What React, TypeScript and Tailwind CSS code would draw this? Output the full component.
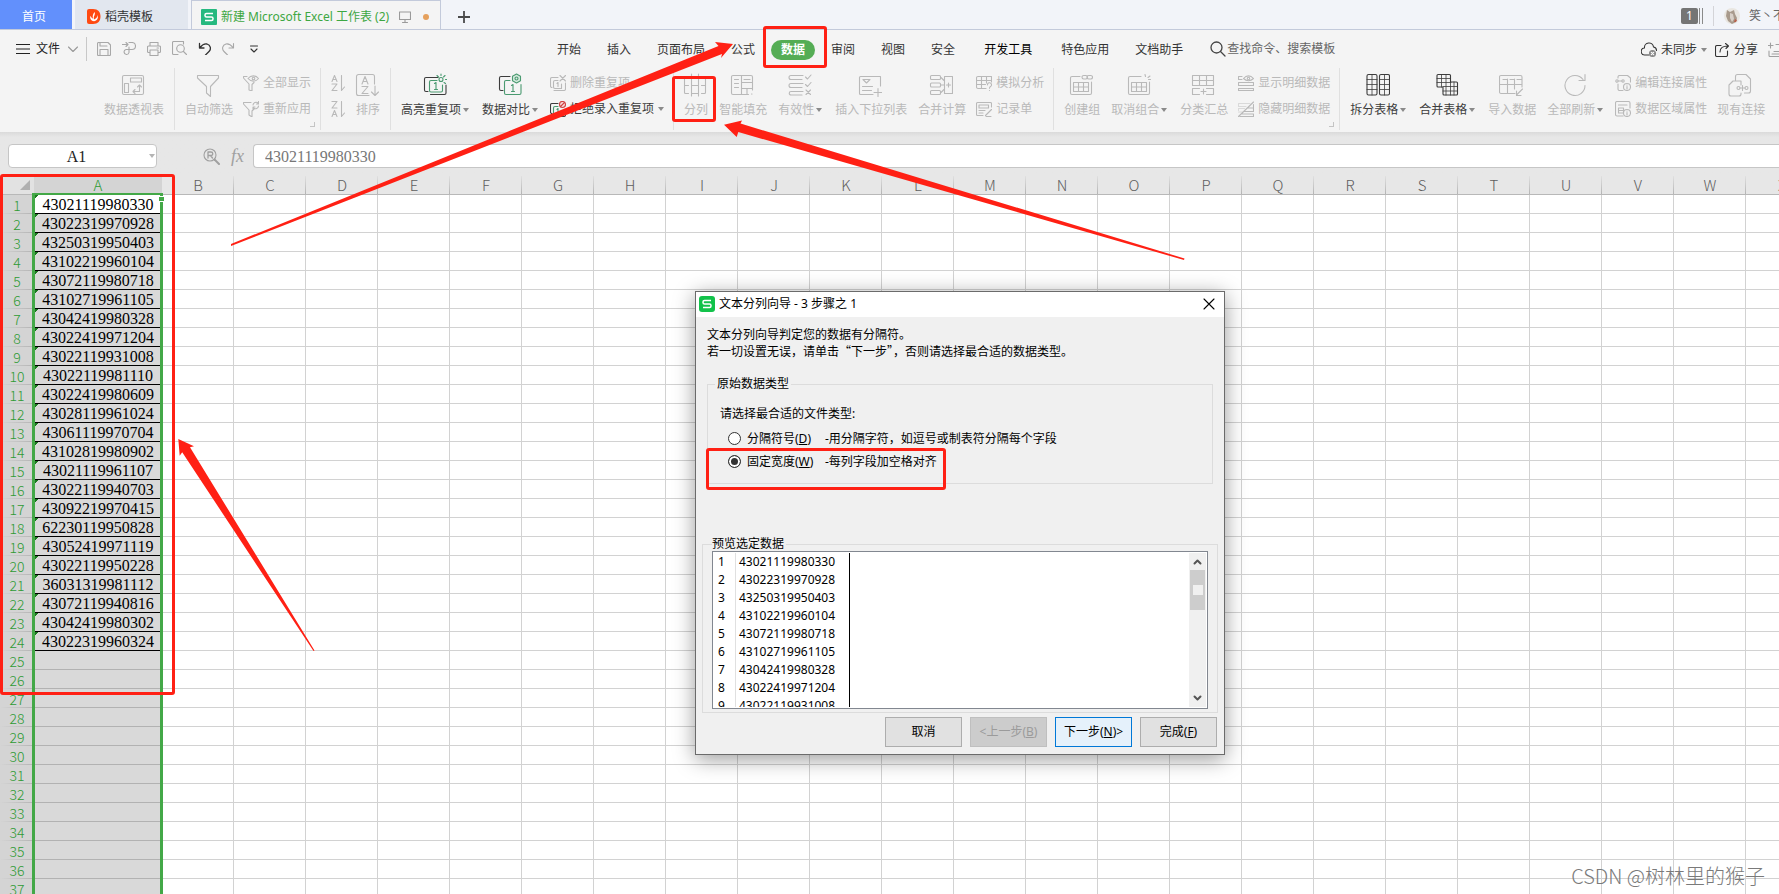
import React from "react";
import clsx from "clsx";

const ids = [
  "43021119980330", "43022319970928", "43250319950403", "43102219960104",
  "43072119980718", "43102719961105", "43042419980328", "43022419971204",
  "43022119931008", "43022119981110", "43022419980609", "43028119961024",
  "43061119970704", "43102819980902", "43021119961107", "43022119940703",
  "43092219970415", "62230119950828", "43052419971119", "43022119950228",
  "36031319981112", "43072119940816", "43042419980302", "43022319960324",
];

const columns = "BCDEFGHIJKLMNOPQRSTUVWX".split("");
const rows = Array.from({ length: 37 }, (_, i) => i + 1);

type IconProps = { size?: number; children: React.ReactNode; className?: string };

const Icon = ({ size = 24, children, className }: IconProps) => (
  <svg
    width={size}
    height={size}
    viewBox={`0 0 ${size} ${size}`}
    fill="none"
    stroke="currentColor"
    strokeWidth="1.1"
    strokeLinecap="round"
    strokeLinejoin="round"
    className={clsx("shrink-0", className)}
    aria-hidden="true"
  >
    {children}
  </svg>
);

const Caret = ({ className = "text-[#8a8a8a]" }: { className?: string }) => (
  <svg width="6" height="4" viewBox="0 0 6 4" className={clsx("shrink-0", className)} aria-hidden="true">
    <path d="M0 0h6L3 4z" fill="currentColor" />
  </svg>
);

const SheetLogo = ({ flat = false }: { flat?: boolean }) => (
  <svg width="16" height="16" viewBox="0 0 16 16" className="shrink-0" aria-hidden="true">
    <rect width="16" height="16" rx={flat ? 1 : 3} fill={flat ? "#26b97f" : "#12c24a"} />
    <path
      d="M12 4.500H5.500a1.500 1.500 0 0 0-1.500 1.500v.5A1.500 1.500 0 0 0 5.500 8h5A1.500 1.500 0 0 1 12 9.500v.5a1.500 1.500 0 0 1-1.500 1.500H4"
      fill="none"
      stroke="#fff"
      strokeWidth="1.500"
    />
  </svg>
);

/* ---- ribbon icons ---- */

const big = {
  pivot: (
    <>
      <rect x="1.500" y="2.500" width="21" height="19" rx="1.500" />
      <rect x="9.500" y="5" width="11" height="4" />
      <rect x="3.500" y="10.500" width="4" height="9" />
      <path d="M12 18.500h6.500V12M14 16.500l-2 2 2 2M16.500 14l2-2 2 2" />
    </>
  ),
  funnel: <path d="M1.500 2.500h21V5L14.500 13.500v10l-4-3.500v-6.500L1.500 5z" />,
  sort: (
    <>
      <path d="M19.500 11V3.500a2 2 0 0 0-2-2h-14a2 2 0 0 0-2 2v17a2 2 0 0 0 2 2H14M20 13v9M16.500 19l3.500 3.500 3.500-3.500" />
      <path d="M7 11l3-7.500 3 7.500M8 8.500h4M7 13.500h6l-6 7h6" />
    </>
  ),
  highlight: (
    <>
      <path d="M15 4.500H3a1.500 1.500 0 0 0-1.500 1.500v11A1.500 1.500 0 0 0 3 18.500h2" />
      <path d="M7.500 21.500h14a1.500 1.500 0 0 0 1.500-1.500V12" />
      <g stroke="#4a9a70">
        <path d="M14 7.500H8A1.500 1.500 0 0 0 6.500 9v8.500A1.500 1.500 0 0 0 8 19h10a1.500 1.500 0 0 0 1.500-1.500V12M11.500 10.500l1.500-1v7M11.500 16.500h3" />
        <circle cx="18" cy="6.500" r="2" />
        <path d="M18 1v1.500M22 2.500l-1.500 1.500M14 2.500l1.500 1.500M22.500 6.500H24M21 9.500l1.500 1" />
      </g>
    </>
  ),
  compare: (
    <>
      <path d="M12 3.500H3A1.500 1.500 0 0 0 1.500 5v11A1.500 1.500 0 0 0 3 17.500h2" />
      <g stroke="#4a9a70">
        <path d="M12 7.500H8A1.500 1.500 0 0 0 6.500 9v11A1.500 1.500 0 0 0 8 21.500h13.500a1.500 1.500 0 0 0 1.500-1.500v-8.500" />
        <path d="M13.500 12.500l1.500-1v7M13.500 18.500h3" />
        <path d="M18.500 1l4 2.300v4.500l-4 2.200-4-2.200V3.300z" fill="#d8ebe0" />
        <circle cx="18.500" cy="5.500" r="1.500" />
      </g>
    </>
  ),
  split: (
    <path d="M8.500 1v22M15.500 1v22M5.500 3.500H2.500A1 1 0 0 0 1.500 4.500v15a1 1 0 0 0 1 1h3M1.500 12.500h4M18.500 3.500h3a1 1 0 0 1 1 1v15a1 1 0 0 1-1 1h-3M18.500 12.500h4M8.500 3.500h7M8.500 12.500h7M8.500 20.500h7" />
  ),
  fill: (
    <>
      <path d="M11.500 21.500H3A1.500 1.500 0 0 1 1.500 20V4A1.500 1.500 0 0 1 3 2.500h18A1.500 1.500 0 0 1 22.500 4v13M11.500 2.500v19h7M11.500 9.500h11M11.500 15.500h11M4.500 6.500h4M4.500 10.500h4M4.500 14.500h4M14 6.500h6M21.500 21h.5" />
      <path d="M17 15.500v6" />
    </>
  ),
  valid: (
    <>
      <path d="M15 2.500H3a1.500 1.500 0 0 0 0 4h11M15 10.500H3a1.500 1.500 0 0 0 0 4h11M15 18.500H3a1.500 1.500 0 0 0 0 3.500h11" />
      <path d="M17.500 4l2 2 3.500-4M17.500 11.500l2 2 3.500-4M18 17l4.500 4.500M22.500 17L18 21.500" />
    </>
  ),
  dropdown: (
    <>
      <path d="M22.500 13V3.500h-20A1 1 0 0 0 1.500 4.500v16a1 1 0 0 0 1 1H15" />
      <path d="M5 6.500h7l-3.500 3.500zM4.500 13.500h10M4.500 17.500h9M20 15.500v8M16 19.500h8" />
    </>
  ),
  merge: (
    <>
      <rect x="1.500" y="2.500" width="10" height="4" rx="1" />
      <rect x="1.500" y="10" width="10" height="4" rx="1" />
      <rect x="1.500" y="17.500" width="10" height="4" rx="1" />
      <path d="M12 4.500l3 3M12 12h3M12 19.500l3-3M15.500 3.500h8v17h-8zM17.500 12h4M19.500 10v4" />
    </>
  ),
  group: (
    <>
      <path d="M11 3.500H3A1.500 1.500 0 0 0 1.500 5v15A1.500 1.500 0 0 0 3 21.500h18a1.500 1.500 0 0 0 1.500-1.500V9M4.500 9.500h15v9h-15zM4.500 14h15M9.500 9.500v9M14.500 9.500v9" />
      <rect x="13" y="2.500" width="5.500" height="3.500" rx="1.700" />
      <rect x="18" y="2.500" width="5.500" height="3.500" rx="1.700" />
    </>
  ),
  ungroup: (
    <>
      <path d="M14 3.500H3A1.500 1.500 0 0 0 1.500 5v15A1.500 1.500 0 0 0 3 21.500h18a1.500 1.500 0 0 0 1.500-1.500V9M4.500 9.500h15v9h-15zM4.500 14h15M9.500 9.500v9M14.500 9.500v9" />
      <path d="M18 1.500l.5 2M23 3l-2 1.500M21.500 6.500h2" />
    </>
  ),
  subtotal: (
    <path d="M1.500 2.500h21v10h-21zM1.500 7.500h21M8.500 2.500v10M15.500 2.500v10M8.500 15.500h-7v6h7M15.500 15.500h7v6h-7M10 18.500h5M12.500 16v5" />
  ),
  splitTable: (
    <>
      <rect x="1" y="1.500" width="10" height="20.500" rx="1.500" />
      <rect x="13.500" y="1.500" width="10" height="20.500" rx="1.500" />
      <path strokeWidth=".8" d="M6 2v20M1 6.500h10M1 11.500h10M1 16.500h10M18.500 2v20M13.500 6.500h10M13.500 11.500h10M13.500 16.500h10" />
    </>
  ),
  mergeTable: (
    <>
      <path d="M3 1.500h11.500a1 1 0 0 1 1 1V9h6a1 1 0 0 1 1 1v11a1 1 0 0 1-1 1H9a1 1 0 0 1-1-1v-7H3a1 1 0 0 1-1-1V2.500a1 1 0 0 1 1-1z" />
      <path strokeWidth=".8" d="M6.500 2v12M11 2v20M15.500 9v13M2 5.500h13M2 9.500h14M8 13.500h14M8 18h14M19 9v13" />
    </>
  ),
  importData: (
    <path d="M16 20.500H2A1.500 1.500 0 0 1 .5 19V4A1.500 1.500 0 0 1 2 2.500h19.500A1.500 1.500 0 0 1 23 4v10M1 11.500h22M8.500 6v14M15.500 6v10M4 6.500h4.500M11 6.500h4.500M18 6.500h5M23.500 16l-6 6M17.500 18v4.500H22" />
  ),
  refresh: <path d="M22 12.500A10 10 0 1 1 20 6.500M22 1.500v6h-6" />,
  links: (
    <>
      <path d="M7.500 7V3.500a2 2 0 0 1 2-2H18l4.500 4.500v12a2 2 0 0 1-2 2h-4M13 20v1a2 2 0 0 1-2 2H3a2 2 0 0 1-2-2V12l4-4h8v4" />
      <circle cx="10.500" cy="15" r="1.500" />
      <circle cx="18.500" cy="15" r="1.500" />
      <path d="M12 15h5M14.500 12.500v5" />
    </>
  ),
};

const small = {
  showAll: (
    <>
      <path d="M4 1.500H.5V3L6 9v6l3 1V9.500l2-2" />
      <path d="M5 3.500C8 0 12.500 0 15.500 3.500 12.500 7 8 7 5 3.500z" />
      <circle cx="10.500" cy="3.500" r="1.300" />
    </>
  ),
  reapply: (
    <>
      <path d="M8 1.500H.5V3L6 9v5l3 2v-6l2-2" />
      <path d="M10 4a3 3 0 0 1 5-2M15.500.5V3h-2M15.500 5a3 3 0 0 1-5 2M10 8V6h2" />
    </>
  ),
  az: <path d="M2 6.500l2.500-6 2.500 6M3 4.500h3M2 9h5l-5 6.500h5M11.500.5v15M14.500 12l-3 3.500" />,
  za: <path d="M2 .5h5L2 7h5M2 15.500l2.500-6 2.500 6M3 13.500h3M11.500.5v15M14.500 12l-3 3.500" />,
  dedupe: (
    <>
      <path d="M8 2.500H2A1.500 1.500 0 0 0 .5 4v7A1.500 1.500 0 0 0 2 12.500M4 15.500h10a1.500 1.500 0 0 0 1.500-1.500V8" />
      <path d="M8 5.500H5A1.500 1.500 0 0 0 3.500 7v5A1.500 1.500 0 0 0 5 13.500h6.500V9M7 8.500l1-1v4M10 .5L15.500 6M15.500.5L10 6" />
    </>
  ),
  reject: (
    <>
      <path d="M8 2.500H2A1.500 1.500 0 0 0 .5 4v7A1.500 1.500 0 0 0 2 12.500M4 15.500h10a1.500 1.500 0 0 0 1.500-1.500V9" />
      <path stroke="#4a9a70" d="M8 5.500H5A1.500 1.500 0 0 0 3.500 7v5A1.500 1.500 0 0 0 5 13.500h6.500V10M7 8.500l1-1v4" />
      <circle cx="12.500" cy="3.500" r="3" stroke="#cf4141" fill="#f8dede" />
      <path d="M10.500 5.500l4-4" stroke="#cf4141" />
    </>
  ),
  whatIf: (
    <>
      <path d="M10 13.500H2A1.500 1.500 0 0 1 .5 12V3A1.500 1.500 0 0 1 2 1.500h13.500V7M.5 5.500h15M.5 9.500h9M5.500 1.500v12M10.500 1.500V8" />
      <path d="M11.500 10a2 2 0 1 1 3 1.500c-.8.5-1 1-1 1.800M13.500 15.500v.2" />
    </>
  ),
  form: (
    <path d="M15.500 6V2.500a1 1 0 0 0-1-1h-13a1 1 0 0 0-1 1v11a1 1 0 0 0 1 1H7M3 4h9.500v3H3zM3 9.500h6M3 12h4M15.500 8.500l-6 6M10 15.500h5" />
  ),
  showDetail: (
    <>
      <path d="M4 1.500H.5v3H4M.5 7.500h15v3H.5zM.5 13.500h15v2H.5z" />
      <path d="M5.500 3.500c3-3.500 7-3.500 10 0-3 3-7 3-10 0z" />
      <circle cx="10.500" cy="3.500" r="1.200" />
    </>
  ),
  hideDetail: (
    <>
      <path d="M.5 15.500l15-14.500M15.500 3.500V7h-6M15.500 7v3.500H6M2 15.500h13.500v-2.500H4" />
      <path strokeOpacity=".45" d="M12 2.500H.5v3H8M.5 9.500v-2h6M.5 11h4" />
    </>
  ),
  editLink: (
    <>
      <path d="M3 3V2A1.500 1.500 0 0 1 4.500.5h8L15.500 3v4M3 9v5A1.500 1.500 0 0 0 4.500 15.500H8" />
      <circle cx="2" cy="6" r="1.200" />
      <circle cx="8" cy="6" r="1.200" />
      <path d="M3 6h4" />
      <circle cx="12" cy="12" r="3.500" />
      <path d="M12 11.500v2.500M12 10v.1" />
    </>
  ),
  rangeProps: (
    <>
      <path d="M15 7V2a1.500 1.500 0 0 0-1.500-1.500H2A1.500 1.500 0 0 0 .5 2v11.500A1.500 1.500 0 0 0 2 15h6M3.500 4h8.500M3.500 7h5v5h-5zM3.500 9.500H8" />
      <circle cx="12" cy="12" r="3.500" />
      <path d="M12 11.500v2.500M12 10v.1" />
    </>
  ),
};

type BigButtonProps = { icon: keyof typeof big; label: string; caret?: boolean; enabled?: boolean };

const BigButton = ({ icon, label, caret, enabled }: BigButtonProps) => (
  <button
    type="button"
    disabled={!enabled}
    className={clsx(
      "flex shrink-0 flex-col items-center gap-[5px] pt-[6px] pr-[5px] pl-[6px] leading-4",
      enabled ? "text-[#3c3c3c]" : "text-[#b9b9b9]"
    )}
  >
    <Icon className="mr-px -ml-px">{big[icon]}</Icon>
    <span className="flex items-center gap-[2px]">
      {label}
      {caret && (
        <span className="w-2">
          <Caret />
        </span>
      )}
    </span>
  </button>
);

type SmallItem = { icon: keyof typeof small; label?: string; caret?: boolean; enabled?: boolean };

const SmallStack = ({ items, corner }: { items: SmallItem[]; corner?: boolean }) => (
  <div className="relative flex shrink-0 flex-col pt-[3px] pr-[4px] pl-[5px]">
    {items.map((item) => (
      <button
        key={item.icon}
        type="button"
        disabled={!item.enabled}
        aria-label={item.label ?? item.icon}
        className={clsx(
          "flex h-[26px] items-center gap-1 leading-4",
          item.enabled ? "text-[#3c3c3c]" : "text-[#b9b9b9]"
        )}
      >
        <Icon size={16}>{small[item.icon]}</Icon>
        {item.label}
        {item.caret && (
          <span className="w-[6px]">
            <Caret />
          </span>
        )}
      </button>
    ))}
    {corner && <span className="absolute right-0 -bottom-[5px] size-[5px] border-r border-b border-[#c4c4c4]" />}
  </div>
);

const Divider = () => <span className="mt-px mr-[4px] ml-[5px] h-[62px] w-px shrink-0 bg-[#e0e0e0]" />;

const TitleTabs = () => (
  <div className="flex h-[30px] shrink-0 overflow-hidden border-b border-[#c3cadb] bg-[#f2f4f9]">
    <a href="#home" className="flex w-[72px] shrink-0 items-center justify-center bg-[#6290fc] pt-1 pr-1 text-white">
      首页
    </a>
    <a
      href="#template"
      className="ml-[3px] flex w-[116px] shrink-0 items-center gap-1 border-r-[3px] border-[#f2f4f9] bg-[#e2e7ef] pt-1 pl-3 text-[#333]"
    >
      <svg width="14" height="15" viewBox="0 0 14 15" aria-hidden="true">
        <path d="M0 2Q0 0 2 0h4c5 0 7.500 3 7.500 7.500S11 15 6 15H2q-2 0-2-2z" fill="#ff4a12" />
        <path
          d="M7.500 3C9 5.500 6 7 7 10.500 9 9.500 10.500 8 10.800 6 11.500 9 10 12 7 12.300 4 12 2.800 10 3.200 6.800 4 8 4.800 9 6 9.800 5.300 7 6 5 7.500 3z"
          fill="#fff"
        />
      </svg>
      稻壳模板
    </a>
    <div className="flex w-[250px] shrink-0 items-center gap-1 border-x border-t border-[#c3cadb] bg-[#f4f4f4] pt-1 pl-[9px] text-[#3da742]">
      <SheetLogo flat />
      <span className="w-[174px] shrink-0 whitespace-nowrap">新建 Microsoft Excel 工作表 (2)</span>
      <Icon size={12} className="text-[#9a9a9a]">
        <path d="M.5 1h11v7.500H.5zM6 8.500v3M3.500 11.500h5" />
      </Icon>
      <span className="ml-[8px] size-[6px] rounded-full bg-[#e5a05c]" />
    </div>
    <button type="button" aria-label="新建标签" className="w-[46px] shrink-0 pt-1 pl-[17px] text-[#4a4a4a]">
      <svg width="12" height="12" viewBox="0 0 12 12" aria-hidden="true">
        <path d="M6 0v12M0 6h12" stroke="currentColor" strokeWidth="1.800" />
      </svg>
    </button>
    <div className="ml-auto flex w-[98px] shrink-0 items-center overflow-hidden pt-[2px] whitespace-nowrap text-[#666]">
      <span className="flex h-4 w-[17px] shrink-0 items-center justify-center rounded-[2px] bg-[#757575] text-white">
        1
      </span>
      <span className="ml-px h-4 w-[4px] shrink-0 border-x border-[#8a8a8a]" />
      <span className="mr-[10px] ml-[10px] h-5 w-px shrink-0 bg-[#d4d4d8]" />
      <svg width="16" height="16" viewBox="0 0 16 16" className="mr-[9px] shrink-0" aria-hidden="true">
        <circle cx="8" cy="8" r="8" fill="#e9e6e1" />
        <path d="M3 2l3 2 4-2 1 4 2 4-1 4-4 2-4-3-2-5z" fill="#a89a8c" />
        <path d="M6 5l3 1 1 5-2 3-2-4z" fill="#d8d0c8" />
        <path d="M11 11l2 1-1 2-2 0z" fill="#b8604c" />
      </svg>
      笑丶不
    </div>
  </div>
);

const menuTabs = [
  "开始", "插入", "页面布局", "公式", "数据", "审阅", "视图", "安全", "开发工具", "特色应用", "文档助手",
];

const MenuRow = () => (
  <div className="flex h-[37px] shrink-0 items-center overflow-hidden whitespace-nowrap text-[#333]">
    <div className="flex w-[544px] shrink-0 items-center pl-4">
      <button type="button" className="flex items-center gap-[6px] text-[#222]">
        <Icon size={14}>
          <path d="M0 2.500h14M0 7h14M0 11.500h14" />
        </Icon>
        文件
        <Icon size={10} className="ml-[2px] text-[#999]">
          <path d="M.5 3L5 7.500 9.500 3" />
        </Icon>
      </button>
      <span className="mr-[10px] ml-[8px] h-6 w-px bg-[#c8c8c8]" />
      <div className="flex items-center gap-[11px] text-[#a8a8a8]">
        <button type="button" aria-label="保存">
          <Icon size={14}>
            <path d="M.5 1.500a1 1 0 0 1 1-1H11L13.500 3v9.500a1 1 0 0 1-1 1h-11a1 1 0 0 1-1-1zM3 .5V4h7M3 13.500v-6h8v6" />
          </Icon>
        </button>
        <button type="button" aria-label="输出为PDF">
          <Icon size={14}>
            <path d="M0 2.500h6M4 .5l2 2-2 2M7 .5h3a3.500 3.500 0 0 1 0 7H4a2.500 2.500 0 1 0 3 3V5" />
          </Icon>
        </button>
        <button type="button" aria-label="打印">
          <Icon size={14}>
            <path d="M3 4V.5h8V4M3 10.500H1.500a1 1 0 0 1-1-1V5a1 1 0 0 1 1-1h11a1 1 0 0 1 1 1v4.500a1 1 0 0 1-1 1H11M3 8h8v5.500H3zM10 6h1.500" />
          </Icon>
        </button>
        <button type="button" aria-label="打印预览">
          <Icon size={15}>
            <path d="M6 13.500H1.500a1 1 0 0 1-1-1v-11a1 1 0 0 1 1-1h10V3M11.500 10.500l3 3" />
            <circle cx="8.500" cy="7.500" r="3.800" />
          </Icon>
        </button>
        <button type="button" aria-label="撤销" className="text-[#333]">
          <Icon size={13}>
            <path d="M1.500 1.500V6H6M2 5.500C4 3 6.500 1.500 9 2c3.500 1 4.500 5 2 7.500L7.500 13" strokeWidth="1.300" />
          </Icon>
        </button>
        <button type="button" aria-label="恢复">
          <Icon size={13}>
            <path d="M11.500 1.500V6H7M11 5.500C9 3 6.500 1.500 4 2 .5 3-.5 7 2 9.500L5.500 13" />
          </Icon>
        </button>
        <button type="button" aria-label="自定义快速访问工具栏" className="ml-1 text-[#333]">
          <Icon size={8}>
            <path d="M.5 1h7M1 4l3 3 3-3" />
          </Icon>
        </button>
      </div>
    </div>
    <nav className="flex shrink-0 items-center pt-[2px]">
      {menuTabs.map((tab) => (
        <a
          key={tab}
          href={`#${tab}`}
          className={clsx(
            tab === "数据"
              ? "mx-[3px] rounded-full bg-[#55ad55] px-[10px] py-[2px] font-bold text-white"
              : "px-[13px]",
            tab === "开发工具" && "mx-[3px] text-black"
          )}
        >
          {tab}
        </a>
      ))}
    </nav>
    <button type="button" className="ml-[14px] flex shrink-0 items-center gap-px text-[#666]">
      <Icon size={16} className="text-[#444]">
        <circle cx="6.500" cy="6.500" r="5.500" strokeWidth="1.300" />
        <path d="M10.500 10.500l4.500 4.500" strokeWidth="1.300" />
      </Icon>
      查找命令、搜索模板
    </button>
    <div className="ml-auto flex w-[138px] shrink-0 items-center overflow-hidden pt-[2px]">
      <button type="button" className="flex shrink-0 items-center gap-1">
        <Icon size={16}>
          <path d="M8 13H4a3.500 3.500 0 0 1-.5-7 4.500 4.500 0 0 1 9-1A3.500 3.500 0 0 1 15.500 8.500" />
          <circle cx="11.500" cy="11.500" r="3" fill="#8a8a8a" stroke="#8a8a8a" />
          <path d="M10.300 10.300l2.400 2.400M12.700 10.300l-2.400 2.400" stroke="#fff" />
        </Icon>
        未同步
        <Caret />
      </button>
      <button type="button" className="ml-2 flex shrink-0 items-center gap-[5px]">
        <Icon size={14}>
          <path d="M6 2.500H2A1.500 1.500 0 0 0 .5 4v8A1.500 1.500 0 0 0 2 13.500h9a1.500 1.500 0 0 0 1.500-1.500V8M5 9c0-4 3-6 8-6M10.500.5L13.500 3 11 5.500" />
        </Icon>
        分享
      </button>
      <Icon size={16} className="ml-[10px] text-[#a0a0a0]">
        <path d="M0 3.500h5M2.500 1v5M1 9v4.500a1 1 0 0 0 1 1h13M8 2.500h8M6 9.500h9M4 12h9" />
      </Icon>
    </div>
  </div>
);

const Ribbon = () => (
  <div className="flex h-[65px] shrink-0 items-start overflow-hidden pl-[98px] whitespace-nowrap">
    <BigButton icon="pivot" label="数据透视表" />
    <Divider />
    <BigButton icon="funnel" label="自动筛选" />
    <SmallStack corner items={[{ icon: "showAll", label: "全部显示" }, { icon: "reapply", label: "重新应用" }]} />
    <Divider />
    <SmallStack items={[{ icon: "az" }, { icon: "za" }]} />
    <BigButton icon="sort" label="排序" />
    <Divider />
    <BigButton icon="highlight" label="高亮重复项" caret enabled />
    <BigButton icon="compare" label="数据对比" caret enabled />
    <SmallStack
      items={[
        { icon: "dedupe", label: "删除重复项" },
        { icon: "reject", label: "拒绝录入重复项", caret: true, enabled: true },
      ]}
    />
    <Divider />
    <BigButton icon="split" label="分列" />
    <BigButton icon="fill" label="智能填充" />
    <BigButton icon="valid" label="有效性" caret />
    <BigButton icon="dropdown" label="插入下拉列表" />
    <BigButton icon="merge" label="合并计算" />
    <SmallStack items={[{ icon: "whatIf", label: "模拟分析" }, { icon: "form", label: "记录单" }]} />
    <Divider />
    <BigButton icon="group" label="创建组" />
    <BigButton icon="ungroup" label="取消组合" caret />
    <BigButton icon="subtotal" label="分类汇总" />
    <SmallStack
      corner
      items={[{ icon: "showDetail", label: "显示明细数据" }, { icon: "hideDetail", label: "隐藏明细数据" }]}
    />
    <Divider />
    <BigButton icon="splitTable" label="拆分表格" caret enabled />
    <BigButton icon="mergeTable" label="合并表格" caret enabled />
    <BigButton icon="importData" label="导入数据" />
    <BigButton icon="refresh" label="全部刷新" caret />
    <SmallStack items={[{ icon: "editLink", label: "编辑连接属性" }, { icon: "rangeProps", label: "数据区域属性" }]} />
    <BigButton icon="links" label="现有连接" />
  </div>
);

const FormulaBar = () => (
  <div className="flex h-11 shrink-0 items-start bg-[#e7e7e7] bg-linear-to-b from-[#dadada] to-[#e7e7e7] to-[5px] pt-3 pl-2">
    <div className="relative w-[149px] shrink-0">
      <input
        aria-label="名称框"
        defaultValue="A1"
        className="block h-6 w-full rounded border border-[#c6c6c6] bg-white pt-[2px] pr-6 pl-3 text-center font-['Liberation_Serif',serif] text-base leading-5 text-[#222]"
      />
      <span className="absolute top-[10px] right-[2px] flex">
        <Caret className="text-[#b4b4b4]" />
      </span>
    </div>
    <div className="flex h-6 w-24 shrink-0 items-center gap-[11px] pl-[46px] text-[#a0a0a0]">
      <Icon size={17}>
        <circle cx="7" cy="7" r="6" />
        <path d="M11.500 11.500l4.500 4.500" strokeWidth="2" />
        <path d="M5 10V4h3a1.700 1.700 0 0 1 0 3.500H5M7.500 7.500L9.500 10" strokeWidth="1.300" />
      </Icon>
      <span className="font-['Liberation_Serif',serif] text-lg leading-6 italic">fx</span>
    </div>
    <input
      aria-label="编辑栏"
      defaultValue="43021119980330"
      className="h-6 min-w-0 flex-1 rounded-l border border-r-0 border-[#c6c6c6] bg-white px-[11px] pt-[2px] font-['Liberation_Serif',serif] text-base leading-5 text-[#777]"
    />
  </div>
);

const Sheet = () => (
  <div className="relative min-h-0 flex-1 overflow-hidden bg-white">
    <table className="w-max table-fixed border-separate border-spacing-0">
      <colgroup>
        <col className="w-[34px]" />
        <col className="w-32" />
        {columns.map((col) => (
          <col key={col} className="w-[72px]" />
        ))}
      </colgroup>
      <thead>
        <tr className="h-[19px] font-['Noto_Sans_CJK_SC',sans-serif] text-[15px] leading-[18px] text-[#5e5e5e]">
          <th className="border-b border-[#b8b8b8] bg-[#e2e2e2] p-0" aria-label="全选">
            <svg width="10" height="10" viewBox="0 0 10 10" className="ml-5" aria-hidden="true">
              <path d="M10 0v10H0z" fill="#b0b0b0" />
            </svg>
          </th>
          <th className="border-b border-[#b8b8b8] bg-[#d4d4d4] p-0 font-light text-[#2d9a33]">A</th>
          {columns.map((col) => (
            <th
              key={col}
              className="border-b border-[#b8b8b8] bg-[#e7e7e7] bg-[linear-gradient(#e0e0e0,#b4b4b4)] bg-[length:1px_100%] bg-right bg-no-repeat p-0 font-light"
            >
              {col}
            </th>
          ))}
        </tr>
      </thead>
      <tbody>
        {rows.map((n) => {
          const id = ids[n - 1];
          return (
            <tr key={n} className="h-[19px]">
              <th className="bg-[#d4d4d4] bg-[linear-gradient(to_right,#d4d4d4,#b4b4b4)] bg-[length:100%_1px] bg-bottom bg-no-repeat p-0 font-['Noto_Sans_CJK_SC',sans-serif] text-sm leading-[18px] font-light text-[#2d9a33]">
                {n}
              </th>
              <td
                className={clsx(
                  "border-b p-0 pt-[2px] text-center font-['Liberation_Serif',serif] text-base leading-4 text-black",
                  n === 1 ? "bg-white" : "bg-[#d9d9d9]",
                  id
                    ? "border-black bg-[linear-gradient(135deg,#1c7a20_3px,transparent_3px)]"
                    : "border-[#b2b2b2]"
                )}
              >
                {id}
              </td>
              {columns.map((col) => (
                <td key={col} className="border-r border-b border-[#d2d2d2] p-0" />
              ))}
            </tr>
          );
        })}
      </tbody>
    </table>
    {/* selected column outline */}
    <div className="pointer-events-none absolute top-[17px] left-[32px] h-full w-[131px] border-x-[3px] border-t-2 border-[#43a847]">
      <span className="absolute top-px -right-[4px] size-[6px] border-y border-l border-white bg-[#43a847]" />
    </div>
  </div>
);

const Preview = () => (
  <div className="flex h-[158px] border border-[#828790] bg-white p-px">
    <table className="block min-w-0 flex-1 overflow-hidden border-separate border-spacing-0 leading-[18px]">
      <tbody>
        {ids.slice(0, 9).map((id, i) => (
          <tr key={id} className="h-[18px]">
            <td className="w-[22px] border-r border-[#e0e0e0] p-0 pl-[4px]">{i + 1}</td>
            <td className="w-[114px] border-r border-black p-0 pl-[3px]">{id}</td>
          </tr>
        ))}
      </tbody>
    </table>
    <div className="flex w-[17px] shrink-0 flex-col items-center bg-[#f0f0f0]">
      <Icon size={17} className="text-[#555]">
        <path d="M5.500 10.500l3-3 3 3" strokeWidth="2" />
      </Icon>
      <span className="flex h-10 w-[15px] items-center justify-center bg-[#cdcdcd]">
        <span className="size-[10px] bg-[#f0f0f0]" />
      </span>
      <Icon size={17} className="mt-auto text-[#555]">
        <path d="M5.500 6.500l3 3 3-3" strokeWidth="2" />
      </Icon>
    </div>
  </div>
);

const radio =
  "mr-[6px] size-[13px] appearance-none rounded-full border border-[#333] bg-white checked:bg-[#333] checked:shadow-[inset_0_0_0_2px_#fff]";
const dialogButton = "h-[30px] w-[77px] border";

const Wizard = () => (
  <section
    role="dialog"
    aria-labelledby="wizard-title"
    className="absolute top-[291px] left-[695px] flex h-[464px] w-[530px] flex-col border border-[#6b6b6b] bg-[#f0f0f0] text-black shadow-[0_4px_20px_rgba(0,0,0,0.4)]"
  >
    <header className="flex h-[25px] shrink-0 items-center gap-1 bg-white pr-[9px] pb-px pl-[3px]">
      <SheetLogo />
      <h2 id="wizard-title">文本分列向导 - 3 步骤之 1</h2>
      <button type="button" aria-label="关闭" className="ml-auto">
        <Icon size={12}>
          <path d="M1 1l10 10M11 1L1 11" />
        </Icon>
      </button>
    </header>
    <div className="px-[11px] pt-2 font-['Noto_Sans_CJK_SC',sans-serif] leading-[17px]">
      <p>文本分列向导判定您的数据有分隔符。</p>
      <p>若一切设置无误，请单击“下一步”，否则请选择最合适的数据类型。</p>
    </div>
    <fieldset className="mx-[11px] mt-4 h-[109px] border border-[#dcdcdc] px-3 leading-[18px]">
      <legend className="-ml-[5px] px-[2px]">原始数据类型</legend>
      <p className="mt-3">请选择最合适的文件类型:</p>
      <div className="mt-[4px] flex flex-col pl-2">
        <label className="flex h-[23px] items-center">
          <input type="radio" name="source" className={radio} />
          <span className="w-[78px]">
            分隔符号(<u>D</u>)
          </span>
          -用分隔字符，如逗号或制表符分隔每个字段
        </label>
        <label className="flex h-[23px] items-center">
          <input type="radio" name="source" defaultChecked className={radio} />
          <span className="w-[78px]">
            固定宽度(<u>W</u>)
          </span>
          -每列字段加空格对齐
        </label>
      </div>
    </fieldset>
    <fieldset className="mx-[6px] mt-auto border border-[#dcdcdc] px-[9px] pb-[3px] leading-[14px]">
      <legend className="pr-[2px]">预览选定数据</legend>
      <Preview />
    </fieldset>
    <footer className="mt-1 mb-[7px] flex shrink-0 justify-end gap-2 pr-[7px]">
      <button type="button" className={clsx(dialogButton, "border-[#adadad] bg-[#e1e1e1]")}>
        取消
      </button>
      <button type="button" disabled className={clsx(dialogButton, "border-[#bfbfbf] bg-[#cccccc] text-[#9b9b9b]")}>
        &lt;上一步(<u>B</u>)
      </button>
      <button type="button" className={clsx(dialogButton, "border-[#0078d7] bg-[#e5f1fb]")}>
        下一步(<u>N</u>)&gt;
      </button>
      <button type="button" className={clsx(dialogButton, "border-[#adadad] bg-[#e1e1e1]")}>
        完成(<u>F</u>)
      </button>
    </footer>
  </section>
);

// red marks drawn over the window
const Annotations = () => (
  <div className="pointer-events-none absolute inset-0 overflow-hidden">
    <div className="absolute top-[174px] left-0 h-[521px] w-[175px] rounded-[3px] border-[3px] border-[#ff2014]" />
    <div className="absolute top-[26px] left-[763px] h-[42px] w-[64px] rounded-[3px] border-[3px] border-[#ff2014]" />
    <div className="absolute top-[76px] left-[672px] h-[46px] w-[44px] rounded-[3px] border-[3px] border-[#ff2014]" />
    <div className="absolute top-[448px] left-[706px] h-[42px] w-[240px] rounded-[3px] border-[3px] border-[#ff2014]" />
    <svg width="1200" height="660" viewBox="0 0 1200 660" fill="#ff2014" className="absolute top-0 left-0" aria-hidden="true">
      <path d="M231 246L722 54l-1 4L733 44l-18-2 3.500 4L231 244z" />
      <path d="M1184.500 258.500L740.500 123.500l1.500-3L724 124.700l12.700 12.300 1.600-5L1184 260z" />
      <path d="M314.500 650.500L190 447.300l4-1L178.300 439l1.400 16.700 2.500-3.400L313.500 651z" />
    </svg>
  </div>
);

const App = () => (
  <div className="relative flex h-screen flex-col overflow-hidden bg-[#f4f4f4] font-['Noto_Sans','Noto_Sans_CJK_SC',sans-serif] text-xs">
    <TitleTabs />
    <MenuRow />
    <Ribbon />
    <FormulaBar />
    <Sheet />
    <Wizard />
    <Annotations />
    <p className="absolute right-[14px] bottom-[5px] font-['Noto_Sans_CJK_SC',sans-serif] text-xl leading-[26px] font-light text-[#7a7a7a]">
      CSDN @树林里的猴子
    </p>
  </div>
);

export default App;
